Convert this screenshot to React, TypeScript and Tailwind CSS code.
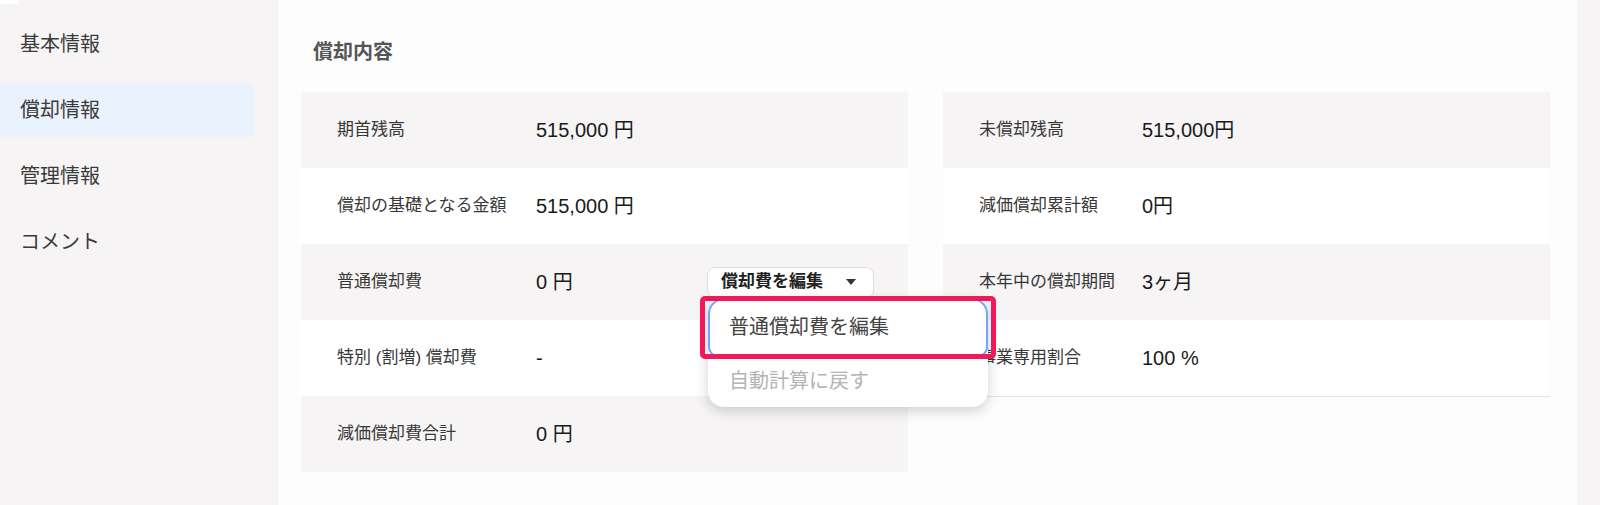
import React from "react";

const FONT = {
  fontFamily: '"Liberation Sans", "Noto Sans CJK JP", sans-serif',
};

type Row = { label: string; value: string; action?: boolean };

const leftRows: Row[] = [
  { label: "期首残高", value: "515,000 円" },
  { label: "償却の基礎となる金額", value: "515,000 円" },
  { label: "普通償却費", value: "0 円", action: true },
  { label: "特別 (割増) 償却費", value: "-" },
  { label: "減価償却費合計", value: "0 円" },
];

const rightRows: Row[] = [
  { label: "未償却残高", value: "515,000円" },
  { label: "減価償却累計額", value: "0円" },
  { label: "本年中の償却期間", value: "3ヶ月" },
  { label: "事業専用割合", value: "100 %" },
];

const navItems = ["基本情報", "償却情報", "管理情報", "コメント"];

function EditMenu() {
  return (
    <div className="relative">
      <button className="flex h-[31px] w-[167px] items-center justify-between rounded-lg border border-[#dedede] bg-white pl-[13px] pr-[17px] text-[17px] font-bold text-[#222]">
        <span>償却費を編集</span>
        <svg width="10" height="6" viewBox="0 0 10 6">
          <path d="M0 0h10L5 6z" fill="#333" />
        </svg>
      </button>
      <div className="absolute left-[1px] top-full z-10 w-[280px] rounded-2xl bg-white pb-[2px] shadow-[0_4px_14px_rgba(0,0,0,0.18)]">
        <div className="flex h-[59px] items-center rounded-t-2xl rounded-b-[10px] border-2 border-[#76a5f7] pl-[19px] text-[20px] text-[#444]">
          普通償却費を編集
        </div>
        <div className="flex h-[48px] items-center pl-[21px] text-[20px] text-[#b4b4b4]">
          自動計算に戻す
        </div>
        <div className="absolute -left-[8px] -top-[2px] h-[63px] w-[296px] rounded-[5px] border-[5px] border-[#f0195c]" />
      </div>
    </div>
  );
}

function InfoTable({
  rows,
  labelWidth,
  bordered,
}: {
  rows: Row[];
  labelWidth: string;
  bordered?: boolean;
}) {
  return (
    <div className={bordered ? "border-b border-[#e3e3e3]" : ""}>
      {rows.map((row, i) => (
        <div
          key={row.label}
          className={`flex h-[76px] items-center pl-[36px] ${
            i % 2 === 0 ? "bg-[#f6f4f4]" : "bg-white"
          }`}
        >
          <div className={`${labelWidth} text-[17px] text-[#383838]`}>{row.label}</div>
          <div className={`text-[20px] text-[#1a1a1a] ${row.action ? "w-[171px]" : ""}`}>
            {row.value}
          </div>
          {row.action && <EditMenu />}
        </div>
      ))}
    </div>
  );
}

export default function App() {
  return (
    <div className="flex h-[505px] w-[1600px] overflow-hidden bg-white" style={FONT}>
      <aside className="w-[278px] shrink-0 bg-[#f6f4f4]">
        <div className="h-[4px] w-[19px] bg-white" />
        <nav className="flex flex-col gap-[12px] pt-[13px]">
          {navItems.map((item) => (
            <div
              key={item}
              className={`flex h-[54px] w-[254px] items-center rounded-r-md pl-[20px] text-[20px] text-[#3a3a3a] ${
                item === "償却情報" ? "bg-[#eaf2fd]" : ""
              }`}
            >
              {item}
            </div>
          ))}
        </nav>
      </aside>

      <main className="flex-1 bg-[#fdfdfd] pl-[23px] pr-[27px]">
        <h2 className="flex h-[92px] items-center pl-[12px] pt-[12px] text-[20px] font-bold text-[#555]">
          償却内容
        </h2>
        <div className="grid grid-cols-2 gap-[35px]">
          <InfoTable rows={leftRows} labelWidth="w-[199px]" />
          <div className="self-start">
            <InfoTable rows={rightRows} labelWidth="w-[163px]" bordered />
          </div>
        </div>
      </main>

      <div className="w-[23px] shrink-0 bg-[#f6f4f4]" />
    </div>
  );
}
